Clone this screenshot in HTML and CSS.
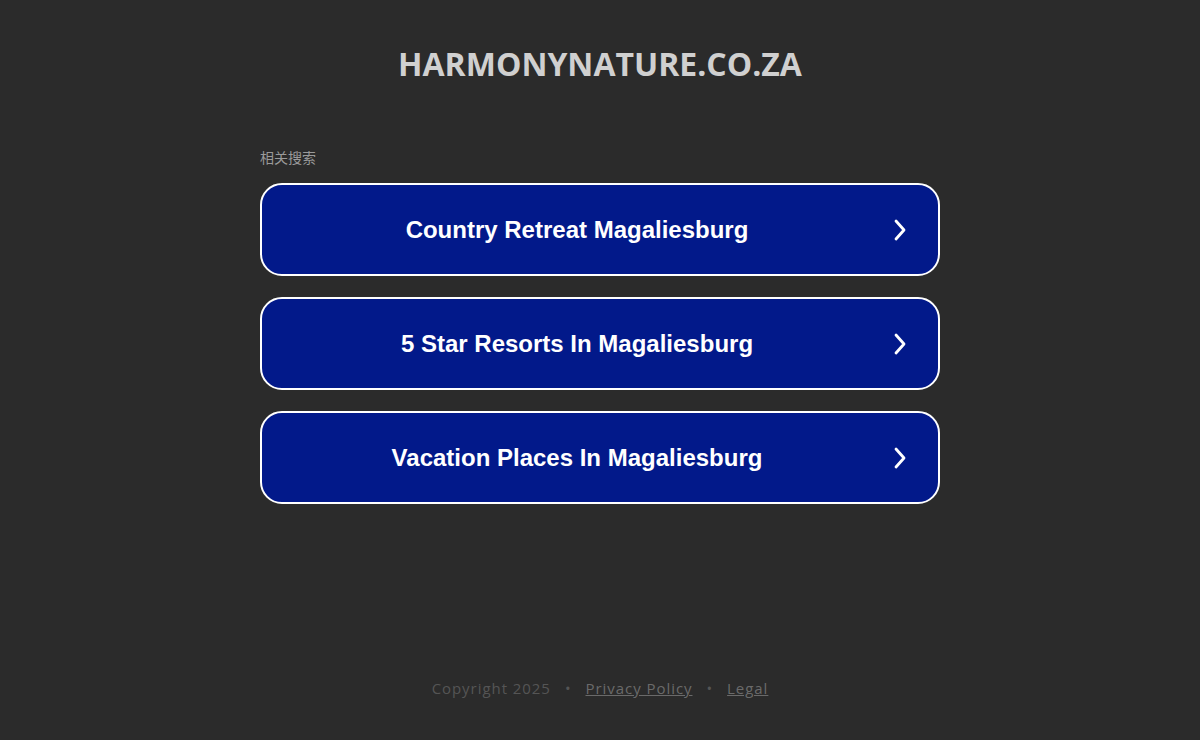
FILE: index.html
```html
<!DOCTYPE html>
<html>
<head>
<meta charset="utf-8">
<link rel="stylesheet" href="styles.css">
</head>
<body>
<div class="page">
  <header class="header">HARMONYNATURE.CO.ZA</header>
  <main class="main">
    <div class="label">相关搜索</div>
    <a class="btn" href="#"><span class="btn-text">Country Retreat Magaliesburg</span><svg class="chev" viewBox="0 0 16 24" width="16" height="24"><path d="M4 3 L12 12 L4 21" fill="none" stroke="#fff" stroke-width="2.8" stroke-linecap="round" stroke-linejoin="round"/></svg></a>
    <a class="btn" href="#"><span class="btn-text">5 Star Resorts In Magaliesburg</span><svg class="chev" viewBox="0 0 16 24" width="16" height="24"><path d="M4 3 L12 12 L4 21" fill="none" stroke="#fff" stroke-width="2.8" stroke-linecap="round" stroke-linejoin="round"/></svg></a>
    <a class="btn" href="#"><span class="btn-text">Vacation Places In Magaliesburg</span><svg class="chev" viewBox="0 0 16 24" width="16" height="24"><path d="M4 3 L12 12 L4 21" fill="none" stroke="#fff" stroke-width="2.8" stroke-linecap="round" stroke-linejoin="round"/></svg></a>
  </main>
  <footer class="footer">
    <span>Copyright 2025</span><span class="dot">•</span><a href="#">Privacy Policy</a><span class="dot">•</span><a href="#">Legal</a>
  </footer>
</div>
</body>
</html>
```
FILE: styles.css
```css
html, body {
  margin: 0;
  padding: 0;
  background: #2b2b2b;
}
.page {
  height: 740px;
  display: flex;
  flex-direction: column;
  align-items: center;
}
.header {
  margin-top: 44px;
  font-family: "Open Sans", sans-serif;
  font-weight: 700;
  font-size: 32px;
  line-height: 40px;
  color: #d0d0d0;
}
.main {
  width: 680px;
  margin-top: 64px;
  display: flex;
  flex-direction: column;
}
.label {
  font-family: "Noto Sans CJK SC", sans-serif;
  font-size: 14px;
  line-height: 18px;
  color: #9a9a9a;
  margin-bottom: 17px;
}
.btn {
  box-sizing: border-box;
  height: 93px;
  margin-bottom: 21px;
  border: 2px solid #ffffff;
  border-radius: 22px;
  background: #02198a;
  display: flex;
  align-items: center;
  padding: 0 30px 0 0;
  text-decoration: none;
}
.btn-text {
  flex: 1;
  text-align: center;
  font-family: "Liberation Sans", Arial, sans-serif;
  font-weight: 700;
  font-size: 24px;
  color: #ffffff;
}
.chev {
  flex: none;
}
.footer {
  margin-top: auto;
  margin-bottom: 42px;
  font-family: "Open Sans", sans-serif;
  font-size: 15px;
  letter-spacing: 0.95px;
  color: #555555;
  display: flex;
  align-items: center;
}
.footer a {
  color: #6a6a6a;
  text-decoration: underline;
}
.dot {
  margin: 0 14px;
}
```
